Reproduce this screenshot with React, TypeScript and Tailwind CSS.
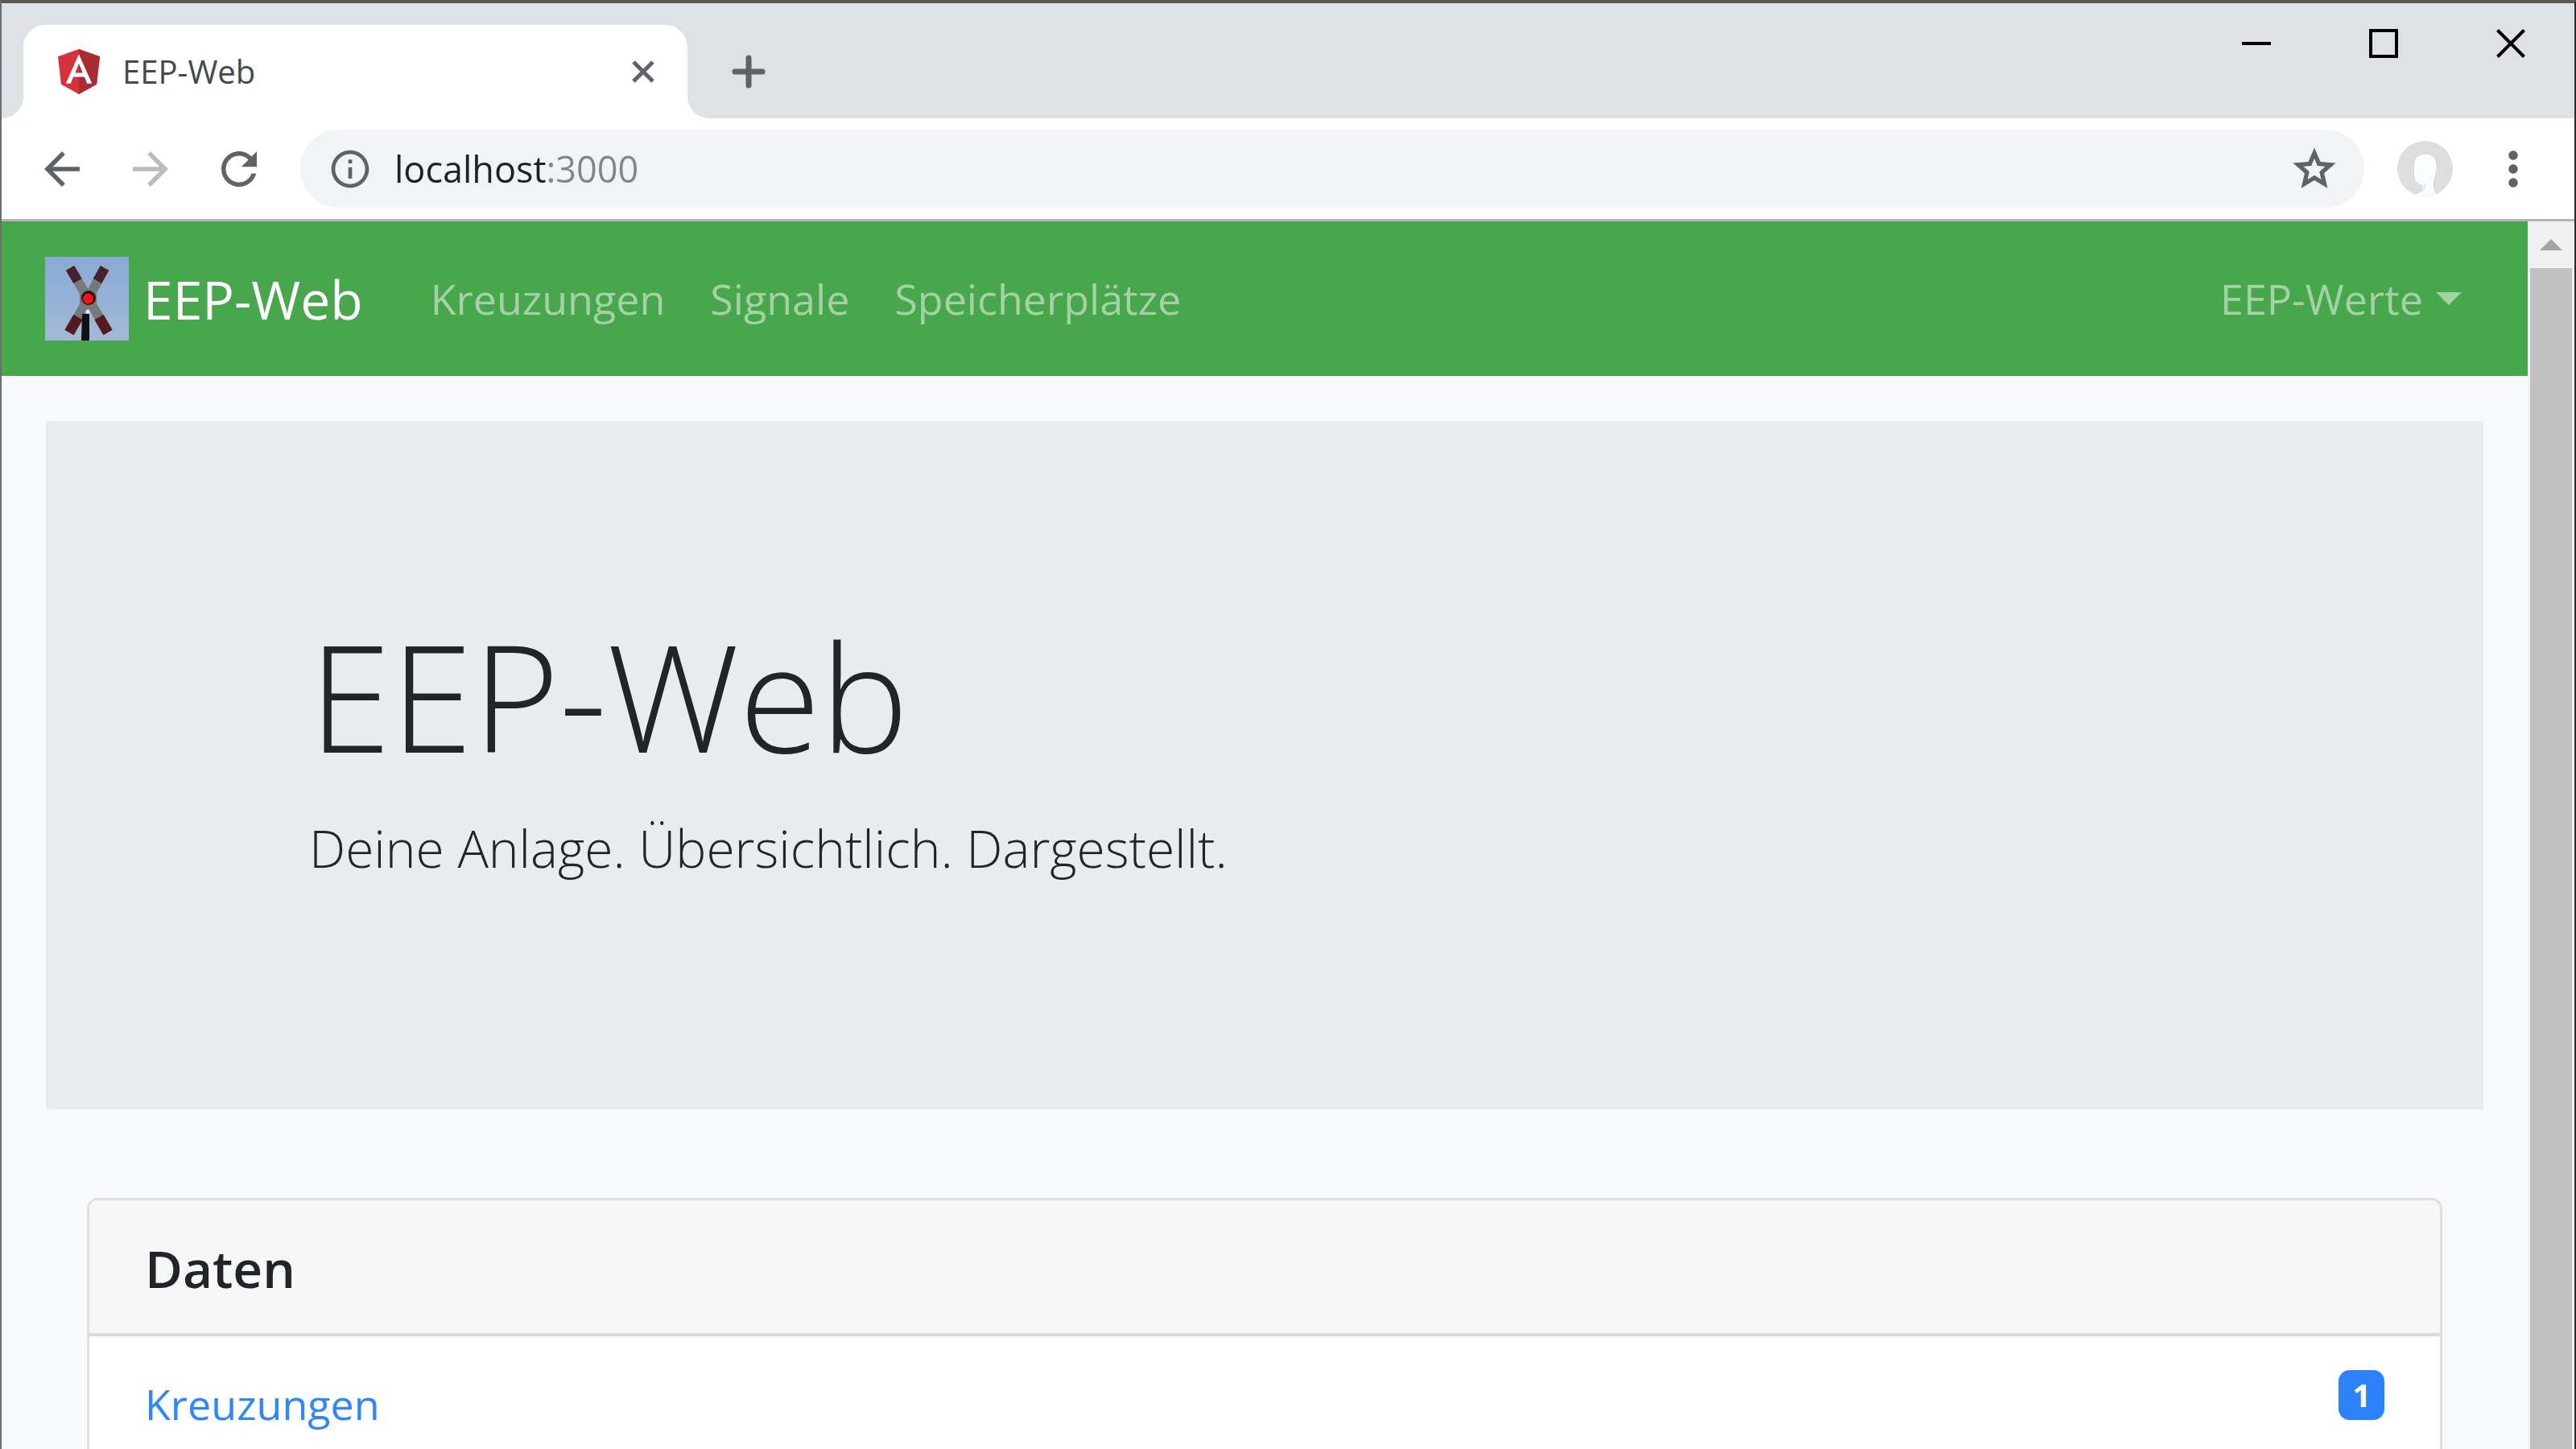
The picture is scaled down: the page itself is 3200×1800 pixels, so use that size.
import { useId, useState } from "react";
import type { ReactNode } from "react";

function AngularLogo() {
  return (
    <svg viewBox="31.9 30 186.2 200" className="h-14 w-[52px] shrink-0" aria-hidden="true">
      <path fill="#d6323e" d="M125 30 31.9 63.2l14.2 123.1L125 230l78.9-43.7 14.2-123.1z" />
      <path fill="#aa2c33" d="M125 30v200l78.9-43.7 14.2-123.1z" />
      <path
        fill="#fff"
        d="M125 52.1 66.8 182.6h21.7l11.7-29.2h49.4l11.7 29.2H183zm17 83.3h-34l17-40.9z"
      />
    </svg>
  );
}

function CrossingLogo() {
  const sky = useId();
  return (
    <svg viewBox="0 0 104 104" className="size-[104px] shrink-0" aria-hidden="true">
      <defs>
        <linearGradient id={sky} x1="0" y1="0" x2="0" y2="1">
          <stop offset="0" stopColor="#89a9d5" />
          <stop offset="1" stopColor="#a3bad7" />
        </linearGradient>
      </defs>
      <rect width="104" height="104" fill={`url(#${sky})`} />
      <g fill="none" strokeWidth="12">
        <path stroke="#747a7b" d="M31 14 53.5 52 78 94M74 14 53.5 52 30 94" />
        <path stroke="#48202a" d="M31 14 40.5 30M74 14 65 30" />
        <path stroke="#541a1f" strokeWidth="13" d="M67 75 78 94M41 75 30 94" />
      </g>
      <path fill="#747a7b" d="M43 40h21v23H43z" />
      <circle cx="53" cy="68" r="2.5" fill="#dfe4e8" />
      <path fill="#0f1114" d="M46 71h9v33h-10z" />
      <circle cx="54" cy="51" r="9" fill="#241416" />
      <circle cx="53.5" cy="52" r="6.5" fill="#f3141b" />
    </svg>
  );
}

function Avatar() {
  const clip = useId();
  return (
    <svg viewBox="0 0 69 69" className="size-[69px]" aria-hidden="true">
      <clipPath id={clip}>
        <circle cx="34.5" cy="34.5" r="34.5" />
      </clipPath>
      <g clipPath={`url(#${clip})`}>
        <rect width="69" height="69" fill="#dedede" />
        <path
          fill="#fafcfe"
          stroke="#cdd5de"
          d="M35 16c-9 0-14 5-14.500 13-.5 9-.5 16 2 21 2 3 5 4 8 5 1 4 0 7-3 9l-8 2v6h32l-4-8c-2-5-3-12-1-18 2-5 3-10 2.500-16C48.500 21 44 16 35 16z"
        />
        <path fill="#e6ebf1" d="M31 55c2 0 4-1 6-3-1 5-3 9-7 12 1-3 2-6 1-9z" />
      </g>
    </svg>
  );
}

function Glyph({ d, className }: { d: string; className: string }) {
  return (
    <svg viewBox="0 0 24 24" fill="currentColor" className={className} aria-hidden="true">
      <path d={d} />
    </svg>
  );
}

function TabFlare({ className, d }: { className: string; d: string }) {
  return (
    <svg viewBox="0 0 27 27" className={className} aria-hidden="true">
      <path fill="#fff" d={d} />
    </svg>
  );
}

function WindowButton({ label, children }: { label: string; children: ReactNode }) {
  return (
    <button type="button" aria-label={label} className="flex h-[99px] w-[158px] items-center justify-center">
      <svg viewBox="0 0 36 36" fill="none" stroke="#000" strokeWidth="4" className="size-9" aria-hidden="true">
        {children}
      </svg>
    </button>
  );
}

function TabStrip() {
  return (
    <div className="flex h-[143px] shrink-0 items-end justify-between bg-[#dee1e6] pl-[27px]">
      <div className="flex items-center">
        <div className="relative flex h-[116px] w-[825px] items-center rounded-t-[27px] bg-white pr-[41px] pl-[43px]">
          <TabFlare className="absolute bottom-0 -left-[27px] size-[27px]" d="M27 0v27H0C15 27 27 15 27 0z" />
          <TabFlare className="absolute -right-[27px] bottom-0 size-[27px]" d="M0 0v27h27C12 27 0 15 0 0z" />
          <AngularLogo />
          <span className="ml-7 grow text-[40px] leading-none text-[#45494d]">EEP-Web</span>
          <button type="button" aria-label="Tab schließen">
            <svg viewBox="0 0 28 28" stroke="#5f6368" strokeWidth="5" className="size-7" aria-hidden="true">
              <path d="M2 2l24 24M26 2 2 26" />
            </svg>
          </button>
        </div>
        <button type="button" aria-label="Neuer Tab" className="ml-[55px]">
          <svg
            viewBox="0 0 42 42"
            stroke="#5f6368"
            strokeWidth="7"
            strokeLinecap="round"
            className="size-[42px]"
            aria-hidden="true"
          >
            <path d="M21 4v34M4 21h34" />
          </svg>
        </button>
      </div>
      <div className="flex self-start">
        <WindowButton label="Minimieren">
          <path d="M0 18h36" />
        </WindowButton>
        <WindowButton label="Maximieren">
          <path d="M2 2h32v32H2z" />
        </WindowButton>
        <WindowButton label="Schließen">
          <path d="M1.500 1.500l33 33M34.500 1.500l-33 33" />
        </WindowButton>
      </div>
    </div>
  );
}

function Toolbar() {
  const [url, setUrl] = useState("localhost:3000");
  return (
    <div className="flex shrink-0 items-center border-b-3 border-[#b4b5b6] bg-white px-[42px] py-[14px] text-[#5f6368]">
      <div className="flex items-center gap-11">
        <button type="button" aria-label="Zurück">
          <Glyph className="size-[66px]" d="M20 11H7.830l5.590-5.590L12 4l-8 8 8 8 1.410-1.410L7.830 13H20v-2z" />
        </button>
        <button type="button" aria-label="Vorwärts" disabled className="text-[#babcbe]">
          <Glyph className="size-[66px]" d="M12 4l-1.410 1.410L16.170 11H4v2h12.170l-5.580 5.590L12 20l8-8z" />
        </button>
        <button type="button" aria-label="Neu laden">
          <Glyph
            className="size-[66px]"
            d="M17.650 6.350C16.200 4.900 14.210 4 12 4c-4.420 0-7.990 3.580-7.990 8s3.570 8 7.990 8c3.730 0 6.840-2.550 7.730-6h-2.080c-.82 2.330-3.040 4-5.650 4-3.310 0-6-2.690-6-6s2.690-6 6-6c1.660 0 3.140.69 4.220 1.780L13 11h7V4l-2.350 2.350z"
          />
        </button>
      </div>
      <div className="ml-[43px] flex h-[97px] grow items-center rounded-full bg-[#f1f3f4] pr-8 pl-[34px]">
        <button type="button" aria-label="Websiteinformationen">
          <Glyph
            className="size-14"
            d="M11 7h2v2h-2zm0 4h2v6h-2zm1-9C6.480 2 2 6.480 2 12s4.480 10 10 10 10-4.480 10-10S17.520 2 12 2zm0 18c-4.410 0-8-3.590-8-8s3.590-8 8-8 8 3.590 8 8-3.590 8-8 8z"
          />
        </button>
        <input
          type="text"
          aria-label="Adresse"
          value={url}
          onChange={(e) => setUrl(e.target.value)}
          className="ml-[27px] h-16 min-w-0 grow bg-[linear-gradient(90deg,#202124_189px,#80868b_189px)] bg-clip-text text-[45px] text-transparent caret-[#202124] outline-none"
        />
        <button type="button" aria-label="Lesezeichen">
          <Glyph
            className="size-[60px] stroke-current [stroke-width:0.5px]"
            d="M22 9.240l-7.190-.62L12 2 9.190 8.630 2 9.240l5.460 4.730L5.820 21 12 17.270 18.180 21l-1.630-7.030L22 9.240zM12 15.400l-3.760 2.270 1-4.280-3.320-2.880 4.380-.38L12 6.100l1.710 4.040 4.380.38-3.320 2.880 1 4.280L12 15.400z"
          />
        </button>
      </div>
      <button type="button" aria-label="Profil" className="ml-[41px]">
        <Avatar />
      </button>
      <button type="button" aria-label="Menü" className="ml-[41px]">
        <Glyph
          className="size-[68px]"
          d="M12 8c1.100 0 2-.9 2-2s-.9-2-2-2-2 .9-2 2 .9 2 2 2zm0 2c-1.100 0-2 .9-2 2s.9 2 2 2 2-.9 2-2-.9-2-2-2zm0 6c-1.100 0-2 .9-2 2s.9 2 2 2 2-.9 2-2-.9-2-2-2z"
        />
      </button>
    </div>
  );
}

const links = ["Kreuzungen", "Signale", "Speicherplätze"];

function Navbar() {
  return (
    <nav className="flex h-[192px] items-center bg-[#48a64c] px-[54px] text-[52px] text-[#a3d2a5]">
      <a href="#start" className="mr-14 flex items-center text-[66px] text-white">
        <CrossingLogo />
        <span className="ml-[18px]">EEP-Web</span>
      </a>
      {links.map((link) => (
        <a key={link} href={`#${link}`} className="px-7">
          {link}
        </a>
      ))}
      <button type="button" aria-haspopup="menu" className="ml-auto flex items-center pr-7">
        EEP-Werte
        <span className="ml-4 border-x-16 border-t-16 border-x-transparent border-t-current" />
      </button>
    </nav>
  );
}

function Page() {
  return (
    <div className="min-w-0 grow overflow-hidden bg-[#f8f9fb] text-[#212529]">
      <Navbar />
      <main>
        <header className="mx-[55px] mt-14 bg-[#e8ecef] px-[327px] pt-[231px] pb-[276px] font-light">
          <h1 className="mb-8 text-[184px] leading-[220px]">EEP-Web</h1>
          <p className="text-[64px] leading-[96px]">Deine Anlage. Übersichtlich. Dargestellt.</p>
        </header>
        <section className="mx-[106px] mt-[110px] overflow-hidden rounded-t-[14px] border-3 border-[#dfdfdf] bg-white">
          <h2 className="border-b-4 border-[#d9d9d9] bg-[#f7f7f7] px-[69px] pt-[45px] pb-10 text-[64px] leading-[80px] font-semibold">
            Daten
          </h2>
          <ul>
            <li className="flex items-start justify-between px-[69px] py-[42px]">
              <a href="#Kreuzungen" className="text-[52px] leading-[84px] text-[#2f86fd]">
                Kreuzungen
              </a>
              <span className="rounded-[14px] bg-[#2d82fc] px-[17px] text-[40px] leading-[62px] font-bold text-white">
                1
              </span>
            </li>
          </ul>
        </section>
      </main>
    </div>
  );
}

function Scrollbar() {
  return (
    <div className="flex w-[58px] shrink-0 flex-col bg-[#f0f0f0]" aria-hidden="true">
      <div className="flex h-[58px] items-center justify-center">
        <span className="border-x-14 border-b-14 border-x-transparent border-b-[#a3a3a3]" />
      </div>
      <div className="mx-[3px] grow bg-[#c1c1c1]" />
    </div>
  );
}

export default function App() {
  return (
    <div className="flex h-screen flex-col overflow-hidden border-x-2 border-t-4 border-t-[#5b5956] border-r-[#2b2b2d] border-l-[#6e6e70] font-['Open_Sans','Noto_Sans',sans-serif]">
      <TabStrip />
      <Toolbar />
      <div className="flex min-h-0 grow">
        <Page />
        <Scrollbar />
      </div>
    </div>
  );
}
